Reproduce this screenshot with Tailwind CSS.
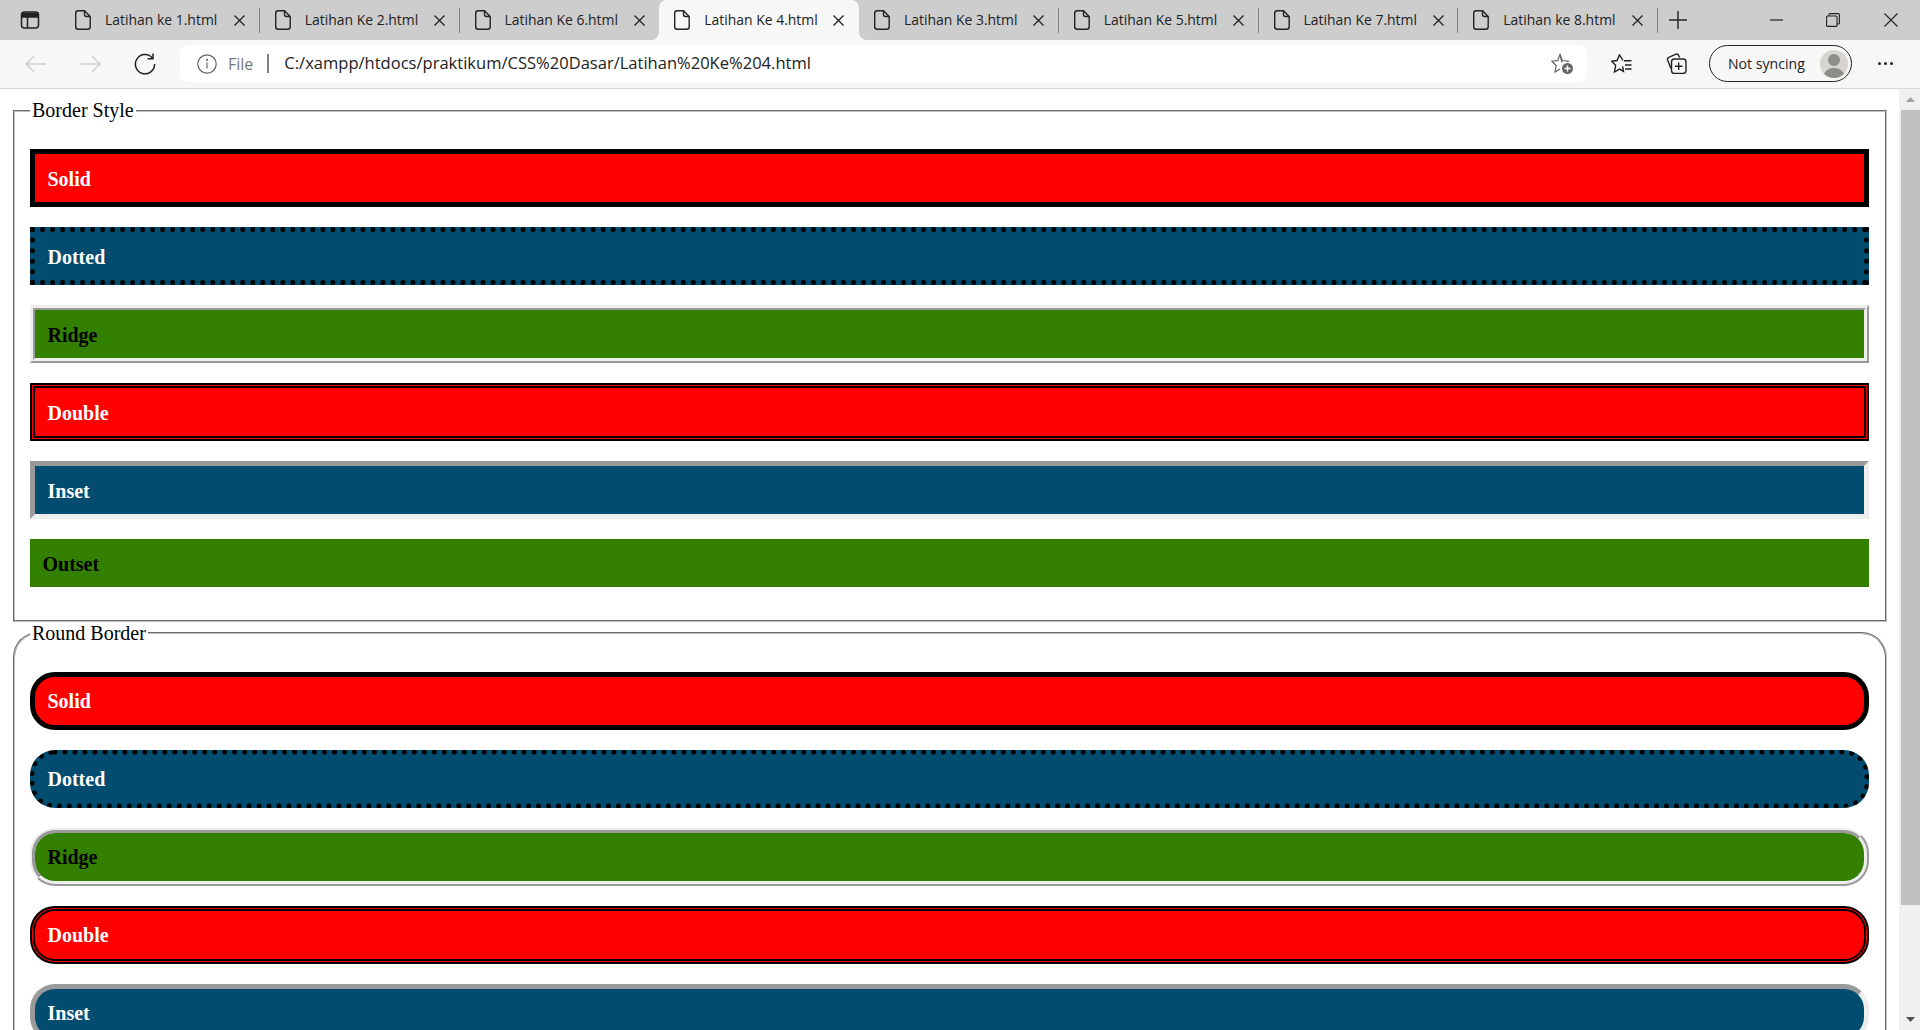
<!DOCTYPE html>
<html lang="en">
<head>
    <meta charset="UTF-8">
    <title>Latihan Ke 4</title>
    <script src="https://cdn.jsdelivr.net/npm/@tailwindcss/browser@4"></script>
</head>
<body class="h-[1030px] w-[1920px] overflow-hidden flex flex-col bg-white font-['Liberation_Serif',serif] text-black">
    <!-- Tab strip -->
    <div class="h-10 shrink-0 flex items-center bg-[#cdcdcd] font-['Open_Sans',sans-serif] text-[13.95px] text-[#222]">
        <div class="w-[60px] h-10 flex items-center justify-center">
            <svg width="20" height="20" viewBox="0 0 20 20" fill="none" stroke="#222" stroke-width="1.5"><rect x="1.5" y="2" width="17" height="16" rx="3"/><path d="M2 3.5h16V7H2z" fill="#222"/><path d="M7.5 7v11"/></svg>
        </div>
        <!-- Tab -->
        <div class="w-[199.75px] h-10 flex items-center pl-[15px]">
            <svg width="16" height="20" viewBox="0 0 16 20" fill="none" stroke="#222" stroke-width="1.4"><path d="M3.2.8h6.3L15.2 6.5v10.2a2.5 2.5 0 0 1-2.5 2.5H3.2a2.5 2.5 0 0 1-2.5-2.5V3.3A2.5 2.5 0 0 1 3.2.8z"/><path d="M9.5.8v3.7a2 2 0 0 0 2 2h3.7"/></svg>
            <span class="ml-[14px] w-[124px] whitespace-nowrap">Latihan ke 1.html</span>
            <svg class="ml-[5px]" width="11" height="11" viewBox="0 0 11 11" stroke="#222" stroke-width="1.3"><path d="M.5.5l10 10M10.5.5l-10 10"/></svg>
            <span class="ml-auto w-px h-[25px] bg-[#808080]"></span>
        </div>
        <div class="w-[199.75px] h-10 flex items-center pl-[15px]">
            <svg width="16" height="20" viewBox="0 0 16 20" fill="none" stroke="#222" stroke-width="1.4"><path d="M3.2.8h6.3L15.2 6.5v10.2a2.5 2.5 0 0 1-2.5 2.5H3.2a2.5 2.5 0 0 1-2.5-2.5V3.3A2.5 2.5 0 0 1 3.2.8z"/><path d="M9.5.8v3.7a2 2 0 0 0 2 2h3.7"/></svg>
            <span class="ml-[14px] w-[124px] whitespace-nowrap">Latihan Ke 2.html</span>
            <svg class="ml-[5px]" width="11" height="11" viewBox="0 0 11 11" stroke="#222" stroke-width="1.3"><path d="M.5.5l10 10M10.5.5l-10 10"/></svg>
            <span class="ml-auto w-px h-[25px] bg-[#808080]"></span>
        </div>
        <div class="w-[199.75px] h-10 flex items-center pl-[15px] rounded-br-lg">
            <svg width="16" height="20" viewBox="0 0 16 20" fill="none" stroke="#222" stroke-width="1.4"><path d="M3.2.8h6.3L15.2 6.5v10.2a2.5 2.5 0 0 1-2.5 2.5H3.2a2.5 2.5 0 0 1-2.5-2.5V3.3A2.5 2.5 0 0 1 3.2.8z"/><path d="M9.5.8v3.7a2 2 0 0 0 2 2h3.7"/></svg>
            <span class="ml-[14px] w-[124px] whitespace-nowrap">Latihan Ke 6.html</span>
            <svg class="ml-[5px]" width="11" height="11" viewBox="0 0 11 11" stroke="#222" stroke-width="1.3"><path d="M.5.5l10 10M10.5.5l-10 10"/></svg>
        </div>
        <!-- Active tab -->
        <div class="relative w-[199.75px] h-10 flex items-center pl-[15px] bg-[#f7f7f7] rounded-t-lg">
            <span class="absolute left-[-8px] bottom-0 w-2 h-2 bg-[radial-gradient(circle_at_0_0,#cdcdcd_7.5px,#f7f7f7_8.5px)]"></span>
            <span class="absolute right-[-8px] bottom-0 w-2 h-2 bg-[radial-gradient(circle_at_100%_0,#cdcdcd_7.5px,#f7f7f7_8.5px)]"></span>
            <svg width="16" height="20" viewBox="0 0 16 20" fill="none" stroke="#222" stroke-width="1.4"><path d="M3.2.8h6.3L15.2 6.5v10.2a2.5 2.5 0 0 1-2.5 2.5H3.2a2.5 2.5 0 0 1-2.5-2.5V3.3A2.5 2.5 0 0 1 3.2.8z"/><path d="M9.5.8v3.7a2 2 0 0 0 2 2h3.7"/></svg>
            <span class="ml-[14px] w-[124px] whitespace-nowrap">Latihan Ke 4.html</span>
            <svg class="ml-[5px]" width="11" height="11" viewBox="0 0 11 11" stroke="#222" stroke-width="1.3"><path d="M.5.5l10 10M10.5.5l-10 10"/></svg>
        </div>
        <div class="w-[199.75px] h-10 flex items-center pl-[15px]">
            <svg width="16" height="20" viewBox="0 0 16 20" fill="none" stroke="#222" stroke-width="1.4"><path d="M3.2.8h6.3L15.2 6.5v10.2a2.5 2.5 0 0 1-2.5 2.5H3.2a2.5 2.5 0 0 1-2.5-2.5V3.3A2.5 2.5 0 0 1 3.2.8z"/><path d="M9.5.8v3.7a2 2 0 0 0 2 2h3.7"/></svg>
            <span class="ml-[14px] w-[124px] whitespace-nowrap">Latihan Ke 3.html</span>
            <svg class="ml-[5px]" width="11" height="11" viewBox="0 0 11 11" stroke="#222" stroke-width="1.3"><path d="M.5.5l10 10M10.5.5l-10 10"/></svg>
            <span class="ml-auto w-px h-[25px] bg-[#808080]"></span>
        </div>
        <div class="w-[199.75px] h-10 flex items-center pl-[15px]">
            <svg width="16" height="20" viewBox="0 0 16 20" fill="none" stroke="#222" stroke-width="1.4"><path d="M3.2.8h6.3L15.2 6.5v10.2a2.5 2.5 0 0 1-2.5 2.5H3.2a2.5 2.5 0 0 1-2.5-2.5V3.3A2.5 2.5 0 0 1 3.2.8z"/><path d="M9.5.8v3.7a2 2 0 0 0 2 2h3.7"/></svg>
            <span class="ml-[14px] w-[124px] whitespace-nowrap">Latihan Ke 5.html</span>
            <svg class="ml-[5px]" width="11" height="11" viewBox="0 0 11 11" stroke="#222" stroke-width="1.3"><path d="M.5.5l10 10M10.5.5l-10 10"/></svg>
            <span class="ml-auto w-px h-[25px] bg-[#808080]"></span>
        </div>
        <div class="w-[199.75px] h-10 flex items-center pl-[15px]">
            <svg width="16" height="20" viewBox="0 0 16 20" fill="none" stroke="#222" stroke-width="1.4"><path d="M3.2.8h6.3L15.2 6.5v10.2a2.5 2.5 0 0 1-2.5 2.5H3.2a2.5 2.5 0 0 1-2.5-2.5V3.3A2.5 2.5 0 0 1 3.2.8z"/><path d="M9.5.8v3.7a2 2 0 0 0 2 2h3.7"/></svg>
            <span class="ml-[14px] w-[124px] whitespace-nowrap">Latihan Ke 7.html</span>
            <svg class="ml-[5px]" width="11" height="11" viewBox="0 0 11 11" stroke="#222" stroke-width="1.3"><path d="M.5.5l10 10M10.5.5l-10 10"/></svg>
            <span class="ml-auto w-px h-[25px] bg-[#808080]"></span>
        </div>
        <div class="w-[199.75px] h-10 flex items-center pl-[15px]">
            <svg width="16" height="20" viewBox="0 0 16 20" fill="none" stroke="#222" stroke-width="1.4"><path d="M3.2.8h6.3L15.2 6.5v10.2a2.5 2.5 0 0 1-2.5 2.5H3.2a2.5 2.5 0 0 1-2.5-2.5V3.3A2.5 2.5 0 0 1 3.2.8z"/><path d="M9.5.8v3.7a2 2 0 0 0 2 2h3.7"/></svg>
            <span class="ml-[14px] w-[124px] whitespace-nowrap">Latihan ke 8.html</span>
            <svg class="ml-[5px]" width="11" height="11" viewBox="0 0 11 11" stroke="#222" stroke-width="1.3"><path d="M.5.5l10 10M10.5.5l-10 10"/></svg>
            <span class="ml-auto w-px h-[25px] bg-[#808080]"></span>
        </div>
        <!-- New tab and window controls -->
        <svg class="ml-[11px]" width="18" height="18" viewBox="0 0 18 18" stroke="#222" stroke-width="1.4"><path d="M9 0v18M0 9h18"/></svg>
        <svg class="ml-[83px]" width="13" height="2" viewBox="0 0 13 2" stroke="#222" stroke-width="1.2"><path d="M0 1h13"/></svg>
        <svg class="ml-[43px]" width="14" height="14" viewBox="0 0 14 14" fill="none" stroke="#222" stroke-width="1.1"><rect x=".6" y="3" width="10.4" height="10.4" rx="1"/><path d="M3 3V1.6a1 1 0 0 1 1-1h8.4a1 1 0 0 1 1 1V10a1 1 0 0 1-1 1H11"/></svg>
        <svg class="ml-[44px]" width="14" height="14" viewBox="0 0 14 14" stroke="#222" stroke-width="1.1"><path d="M.5.5l13 13M13.5.5l-13 13"/></svg>
    </div>

    <!-- Toolbar -->
    <div class="h-[49px] shrink-0 flex items-start pt-[5px] pl-2 bg-[#f7f7f7] border-b border-[#d9d9d9] font-['Open_Sans',sans-serif]">
        <div class="w-[55px] h-[37px] flex items-center justify-center">
            <svg width="21" height="18" viewBox="0 0 21 18" fill="none" stroke="#cfcfcf" stroke-width="1.4"><path d="M21 9H1M9 1L1 9l8 8"/></svg>
        </div>
        <div class="w-[55px] h-[37px] flex items-center justify-center">
            <svg width="21" height="18" viewBox="0 0 21 18" fill="none" stroke="#cfcfcf" stroke-width="1.4"><path d="M0 9h20M12 1l8 8-8 8"/></svg>
        </div>
        <div class="w-[54px] h-[37px] flex items-center justify-center">
            <svg width="22" height="22" viewBox="0 0 22 22" fill="none" stroke="#222" stroke-width="1.5"><path d="M18.5 5.2A9.6 9.6 0 1 0 20.6 11"/><path d="M19 .5v5.2h-5.4"/></svg>
        </div>
        <div class="ml-2 w-[1407px] h-[37px] flex items-center bg-white rounded-lg">
            <svg class="ml-[17px]" width="20" height="20" viewBox="0 0 20 20" fill="none" stroke="#666" stroke-width="1.2"><circle cx="10" cy="10" r="9.2"/><path d="M10 8.6v6"/><circle cx="10" cy="5.8" r=".5" fill="#666"/></svg>
            <span class="ml-[11px] text-[16px] text-[#777]">File</span>
            <span class="ml-[14px] w-[2px] h-[19px] bg-[#808080]"></span>
            <span class="ml-[15px] text-[16.55px] text-[#222] whitespace-nowrap">C:/xampp/htdocs/praktikum/CSS%20Dasar/Latihan%20Ke%204.html</span>
            <svg class="ml-auto mr-[13px]" width="23" height="22" viewBox="0 0 23 22" fill="none" stroke="#666" stroke-width="1.2"><path d="M11 9.5 9 1.5 6.6 7.6.8 8.2l4.400 4.300L4 19l5-3"/><path d="M9 1.5l2.400 6 6 .7-1 1"/><circle cx="16.5" cy="15.5" r="5.5" fill="#666" stroke="none"/><path d="M16.5 12.500v6M13.5 15.500h6" stroke="#fff" stroke-width="1.4"/></svg>
        </div>
        <div class="ml-[6.5px] w-[55px] h-[37px] flex items-center justify-center">
            <svg width="21" height="20" viewBox="0 0 21 20" fill="none" stroke="#222" stroke-width="1.4"><path d="M12 6.500 8.500.9 6 6.500l-5.300.7 3.900 4.100L3.500 18l5-2.900 4 2.300-.9-5"/><path d="M13 6.800h7.500M14 11h6.500M14 15h6.500"/></svg>
        </div>
        <div class="w-[55px] h-[37px] flex items-center justify-center">
            <svg width="21" height="21" viewBox="0 0 21 21" fill="none" stroke="#222" stroke-width="1.4"><path d="M5 15.500 1.600 7a2 2 0 0 1 1.100-2.600L10 1.200a2 2 0 0 1 2.600 1.100l1 2.200"/><rect x="5.500" y="6" width="14.500" height="14.500" rx="3"/><path d="M12.700 9.500v7.500M9 13.200h7.500"/></svg>
        </div>
        <div class="ml-[5.5px] w-[143px] h-[37px] flex items-center pl-[18px] rounded-full border-[1.5px] border-[#222] text-[14.1px] text-[#222]">
            <span class="whitespace-nowrap">Not syncing</span>
            <div class="ml-auto mr-[3px] w-7 h-7 rounded-full overflow-hidden bg-[#d6d5d1] flex flex-col items-center">
                <span class="mt-1 w-3 h-3 shrink-0 rounded-full bg-[#8f8d88]"></span>
                <span class="mt-[2px] w-[22px] h-5 shrink-0 rounded-full bg-[#8f8d88]"></span>
            </div>
        </div>
        <div class="ml-[5.5px] w-[55px] h-[37px] flex items-center justify-center gap-[3px]">
            <span class="w-[3px] h-[3px] rounded-full bg-[#222]"></span>
            <span class="w-[3px] h-[3px] rounded-full bg-[#222]"></span>
            <span class="w-[3px] h-[3px] rounded-full bg-[#222]"></span>
        </div>
    </div>

    <div class="flex-1 min-h-0 flex">
        <!-- Page content -->
        <main class="w-[1899px] h-[941px] overflow-hidden pt-[10px] px-[12.5px] text-[20px] leading-[23px]">
            <fieldset class="[border-style:groove] border-[2.5px] border-[#c0c0c0] pl-[15px] pr-[15.5px] pt-[7px] pb-[12.5px]">
                <legend class="px-[2.5px]">Border Style</legend>
                <div class="mt-5 flex flex-col gap-5 font-bold">
                    <div class="pl-[13px] pr-3 pt-[13.5px] pb-[11.5px] border-[5px] border-solid border-black bg-[#ff0000] text-white">Solid</div>
                    <div class="pl-[13px] pr-3 pt-[13.5px] pb-[11.5px] border-[5px] border-dotted border-black bg-[#024c6f] text-white">Dotted</div>
                    <div class="pl-[13px] pr-3 pt-[13.5px] pb-[11.5px] border-[5px] [border-style:ridge] border-[#eeeeee] bg-[#338000]">Ridge</div>
                    <div class="pl-[13px] pr-3 pt-[13.5px] pb-[11.5px] border-[5px] border-double border-black bg-[#ff0000] text-white">Double</div>
                    <div class="pl-[13px] pr-3 pt-[13.5px] pb-[11.5px] border-[5px] [border-style:inset] border-[#eeeeee] bg-[#024c6f] text-white">Inset</div>
                    <div class="pl-[13px] pr-3 pt-[13.5px] pb-[11.5px] bg-[#338000]">Outset</div>
                </div>
                <div class="h-5"></div>
            </fieldset>
            <fieldset class="[border-style:groove] border-[2.5px] border-[#c0c0c0] rounded-[25px] pl-[15px] pr-[15.5px] pt-[7px] pb-[12.5px]">
                <legend class="px-[2.5px]">Round Border</legend>
                <div class="mt-5 flex flex-col gap-5 font-bold">
                    <div class="pl-[13px] pr-3 pt-[13.5px] pb-[11.5px] border-[5px] border-solid border-black rounded-[25px] bg-[#ff0000] text-white">Solid</div>
                    <div class="pl-[13px] pr-3 pt-[13.5px] pb-[11.5px] border-[5px] border-dotted border-black rounded-[25px] bg-[#024c6f] text-white">Dotted</div>
                    <div class="pl-[13px] pr-3 pt-[13.5px] pb-[11.5px] border-[5px] [border-style:ridge] border-[#eeeeee] rounded-[25px] bg-[#338000]">Ridge</div>
                    <div class="pl-[13px] pr-3 pt-[13.5px] pb-[11.5px] border-[5px] border-double border-black rounded-[25px] bg-[#ff0000] text-white">Double</div>
                    <div class="pl-[13px] pr-3 pt-[13.5px] pb-[11.5px] border-[5px] [border-style:inset] border-[#eeeeee] rounded-[25px] bg-[#024c6f] text-white">Inset</div>
                    <div class="pl-[13px] pr-3 pt-[13.5px] pb-[11.5px] rounded-[25px] bg-[#338000]">Outset</div>
                </div>
            </fieldset>
        </main>

        <!-- Scrollbar -->
        <div class="w-[21px] h-[941px] flex flex-col items-end bg-[#f0f0f0] pl-[2px]">
            <div class="w-full h-[21px] flex items-center justify-center">
                <svg width="9" height="5" viewBox="0 0 9 5" fill="#a3a3a3"><path d="M4.5 0L9 5H0z"/></svg>
            </div>
            <div class="w-full h-[795px] bg-[#c1c1c1]"></div>
            <div class="w-full flex-1 flex items-end justify-center pb-[8px]">
                <svg width="9" height="5" viewBox="0 0 9 5" fill="#505050"><path d="M0 0h9L4.5 5z"/></svg>
            </div>
        </div>
    </div>
</body>
</html>
